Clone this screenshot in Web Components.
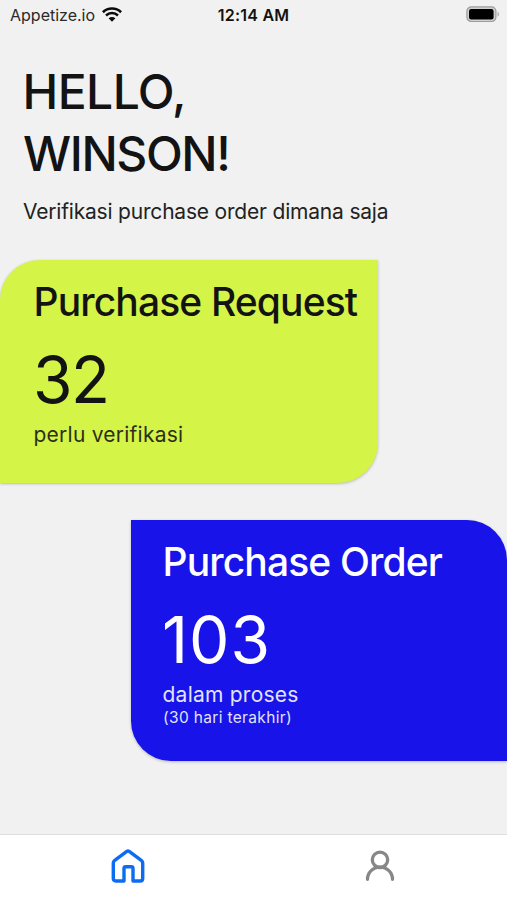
<!DOCTYPE html>
<html lang="id"><head><meta charset="utf-8"><title>Beranda</title>
<style>html,body{height:100%}body{margin:0;font-family:Inter,"Liberation Sans",sans-serif;background:#f1f1f1;color:#131313;overflow:hidden}</style></head>
<body>
<home-screen></home-screen>
<script>
const define = (name, html) => {
  const t = document.createElement('template');
  t.innerHTML = html;
  customElements.define(name, class extends HTMLElement {
    constructor() {
      super();
      this.attachShadow({ mode: 'open' }).append(t.content.cloneNode(true));
    }
  });
};

define('status-bar', `
<style>
:host{display:grid;grid-template-columns:1fr auto 1fr;align-items:center;height:30px;padding:0 7px 0 10px;box-sizing:border-box}
.carrier{display:flex;align-items:center;gap:7px;font-size:16px;line-height:30px;color:#2a2a2a}
.time{font-size:16px;font-weight:600;line-height:30px;letter-spacing:.25px;color:#111;margin-left:-3px}
.battery{justify-self:end;margin-top:-2px}
svg{display:block}
</style>
<div class="carrier"><span>Appetize.io</span>
<svg width="20" height="15" viewBox="0 0 20 15" fill="none" stroke="#0b0b0b" style="margin-top:-2px"><path d="M.9 5.2a13 13 0 0 1 18.2 0" stroke-width="2.7"/><path d="M4 8.5a8.6 8.6 0 0 1 12 0" stroke-width="2.5"/><path d="M6.6 11.3a4.9 4.9 0 0 1 6.8 0L10 14.8z" fill="#0b0b0b" stroke="none"/></svg></div>
<div class="time">12:14 AM</div>
<svg class="battery" width="34" height="17" viewBox="0 0 34 17"><rect x=".9" y=".9" width="29" height="14.6" rx="4.4" fill="#d0d0d0" stroke="#9c9c9c" stroke-width="1.2"/><rect x="3" y="3" width="24.6" height="10.4" rx="2.2"/><path d="M31.6 5.8c1.6.6 1.6 4.2 0 4.8z" fill="#a0a0a0"/></svg>`);

define('greeting-header', `
<style>
:host{display:block;padding:31px 23px 0}
h1{margin:0;font-size:48px;font-weight:500;line-height:62px}
.a{display:block;letter-spacing:-.56px;margin-left:-.5px}.b{display:block;letter-spacing:-1.4px}
p{margin:12px 0 0;font-size:21px;line-height:30px;letter-spacing:-.195px;color:#222}
</style>
<h1><span class="a"><slot name="hello"></slot></span><span class="b"><slot name="name"></slot></span></h1>
<p><slot></slot></p>`);

define('summary-card', `
<style>
:host{display:flex;flex-direction:column;box-sizing:border-box;width:378px;box-shadow:0 1px 3px rgba(0,0,0,.24);white-space:nowrap}
.title{font-size:39px;font-weight:500;line-height:48px;letter-spacing:-.87px;margin-left:-.5px}
.count{font-size:64px;font-weight:380;line-height:76px;margin:16px 0 0 -1px;letter-spacing:var(--count-ls)}
.label{font-size:21px;line-height:28px;margin-top:3px;letter-spacing:.24px;margin-left:-.5px;opacity:.88}
.note{font-size:15.5px;line-height:20px;margin-top:-1px;letter-spacing:.34px;opacity:.88}
</style>
<div class="title"><slot name="title"></slot></div>
<div class="count"><slot name="count"></slot></div>
<div class="label"><slot name="label"></slot></div>
<div class="note"><slot name="note"></slot></div>`);

define('tab-bar', `
<style>
:host{display:grid;grid-template-columns:1fr 1fr;height:66px;box-sizing:border-box;background:#fff;border-top:1px solid #dedede;padding-top:12px;justify-items:center;align-items:start}
</style><slot></slot>`);

define('home-icon', `
<style>:host{display:block;margin-left:2px}svg{display:block}</style>
<svg width="38" height="38" viewBox="0 0 38 38" fill="none" stroke="#0c6cf2" stroke-width="3.4" stroke-linejoin="round"><path d="M4.3 16 Q4.3 14.6 5.4 13.7 L17.8 4.4 Q19 3.5 20.2 4.4 L32.6 13.7 Q33.7 14.6 33.7 16 V31.5 Q33.7 34 31.2 34 H24 V21.5 Q24 19.8 22.3 19.8 H16.7 Q15 19.8 15 21.5 V34 H6.8 Q4.3 34 4.3 31.5 Z"/></svg>`);

define('user-icon', `
<style>:host{display:block}svg{display:block}</style>
<svg width="38" height="38" viewBox="0 0 38 38" fill="none" stroke="#878787" stroke-width="3.3" stroke-linecap="round"><circle cx="19" cy="12.8" r="7.7"/><path d="M6.5 32.3a12.5 12.2 0 0 1 25 0"/></svg>`);

define('home-screen', `
<style>
:host{display:flex;flex-direction:column;height:900px;width:507px;overflow:hidden}
.request{margin-top:33px;height:222.5px;padding:18px 0 0 34px;background:#d5f448;color:#131313;border-radius:40px 0 40px 0;--count-ls:-1.5px}
.order{margin-top:37.5px;align-self:flex-end;width:376.5px;height:241px;padding:17.5px 0 0 32.5px;background:#1713e9;color:#fff;border-radius:0 40px 0 40px;--count-ls:1px}
tab-bar{margin-top:auto}
</style>
<status-bar></status-bar>
<greeting-header><span slot="hello">HELLO,</span><span slot="name">WINSON!</span>Verifikasi purchase order dimana saja</greeting-header>
<summary-card class="request"><span slot="title">Purchase Request</span><span slot="count">32</span><span slot="label">perlu verifikasi</span></summary-card>
<summary-card class="order"><span slot="title">Purchase Order</span><span slot="count">103</span><span slot="label">dalam proses</span><span slot="note">(30 hari terakhir)</span></summary-card>
<tab-bar><home-icon></home-icon><user-icon></user-icon></tab-bar>`);
</script></body></html>
